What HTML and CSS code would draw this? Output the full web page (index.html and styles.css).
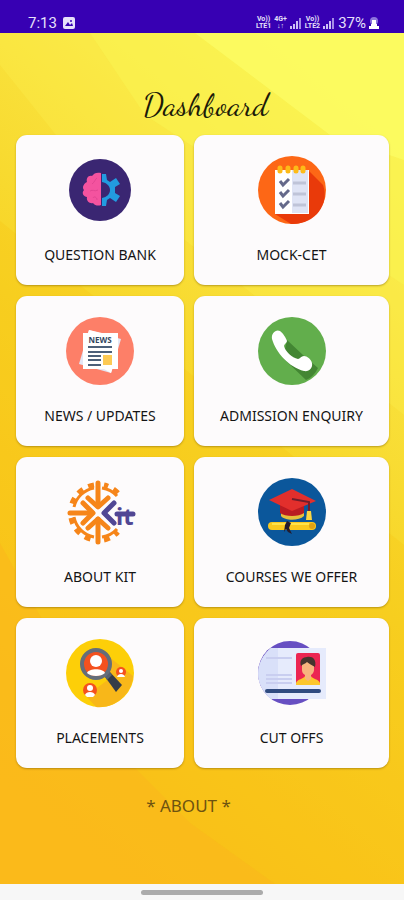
FILE: index.html
```html
<!DOCTYPE html>
<html lang="en">
<head>
    <meta charset="UTF-8">
    <meta name="viewport" content="width=device-width, initial-scale=1.0">
    <title>Dashboard</title>
    <link rel="stylesheet" href="styles.css">
</head>
<body>
    <!-- Status bar -->
    <header class="status-bar">
        <div class="status-left">
            <span>7:13</span>
            <svg class="status-photo" viewBox="0 0 12 12">
                <rect width="12" height="12" rx="2" fill="#e6e0fa"/>
                <path d="M2 9 L5 5 L7 8 L9 6 L10 9 Z" fill="#3700b3"/>
                <circle cx="8" cy="4" r="1" fill="#3700b3"/>
            </svg>
        </div>
        <div class="status-right">
            <span class="status-tiny">Vo))<br>LTE1</span>
            <span class="status-tiny">4G+<br>↓↑</span>
            <svg class="status-signal" viewBox="0 0 12 12">
                <path d="M0 9h2v3H0zM3 7h2v5H3zM6 4h2v8H6z" fill="#cdbff5"/>
                <path d="M9 1h2v11H9z" fill="#a58ce6"/>
            </svg>
            <span class="status-tiny">Vo))<br>LTE2</span>
            <svg class="status-signal" viewBox="0 0 12 12">
                <path d="M0 9h2v3H0zM3 7h2v5H3zM6 4h2v8H6z" fill="#cdbff5"/>
                <path d="M9 1h2v11H9z" fill="#a58ce6"/>
            </svg>
            <span>37%</span>
            <svg class="status-battery" viewBox="0 0 10 13">
                <circle cx="5" cy="4" r="4" fill="#8c74dc"/>
                <path d="M3 3h4v4h1v2h2v3H0V9h2V7h1z" fill="#fff"/>
            </svg>
        </div>
    </header>

    <main class="dashboard">
        <svg class="backdrop" viewBox="0 0 404 851" preserveAspectRatio="none">
            <defs>
                <linearGradient id="sun" x1="0.7" y1="0" x2="0.3" y2="1">
                    <stop offset="0" stop-color="#fbf054"/>
                    <stop offset="0.25" stop-color="#f9e13b"/>
                    <stop offset="0.5" stop-color="#f7d324"/>
                    <stop offset="0.8" stop-color="#f9c41b"/>
                    <stop offset="1" stop-color="#fbbd1b"/>
                </linearGradient>
            </defs>
            <rect width="404" height="851" fill="url(#sun)"/>
            <path d="M0 0H404V382L60 107L0 32Z" fill="#fdf14e" opacity="0.3"/>
            <path d="M90 0H404V252L145 82Z" fill="#faf551" opacity="0.5"/>
            <path d="M195 0H404V127L330 102Z" fill="#fbfc62" opacity="0.85"/>
            <path d="M0 188L404 512V851H0Z" fill="#f8c414" opacity="0.3"/>
            <path d="M0 510L110 710L190 790L275 851H0Z" fill="#fcb61b" opacity="0.5"/>
        </svg>

        <h1 class="title">Dashboard</h1>

        <div class="menu">
            <button type="button" class="card">
                <svg class="icon" viewBox="0 0 68 68">
                    <circle cx="34" cy="34" r="31" fill="#3a2672"/>
                    <path d="M35 17C31 16 28 17 26 20C22 19 20 23 21 26C17 28 16 32 18 34C15 37 18 41 21 41C20 45 24 48 27 47C29 50 33 50 35 49Z" fill="#f4539f"/>
                    <path d="M31 22C29 23 29 26 26 28M24 35C27 33 28 36 32 34M27 42C28 40 31 41 31 44" fill="none" stroke="#e34692"/>
                    <path d="M36 18L40 18L41 24L44 26L50 22L54 28L49 31V37L54 40L50 46L44 42L41 44L40 50H36V42C41 41 44 38 44 34C44 30 41 27 36 26Z" fill="#229be0"/>
                </svg>
                <span class="label">QUESTION BANK</span>
            </button>

            <button type="button" class="card">
                <svg class="icon" viewBox="0 0 68 68">
                    <circle cx="34" cy="34" r="34" fill="#fd6716"/>
                    <path d="M51 15L65 29C72 48 57 69 33 68L17 58Z" fill="#e93a0a"/>
                    <path d="M17 14H51V58H17Z" fill="#fff"/>
                    <path d="M34 14H50V57H34Z" fill="#dfe4f5"/>
                    <path d="M22 12V15M30 12V15M38 12V15M45 12V15" stroke="#fdbb18" stroke-width="5" stroke-linecap="round"/>
                    <path d="M22 25L25 29L31 23M22 36L25 40L31 34M22 47L25 51L31 45" fill="none" stroke="#65698a" stroke-width="3"/>
                    <path d="M35 27H48M35 38H48M35 49H48" stroke="#bfc4d8" stroke-width="3"/>
                </svg>
                <span class="label">MOCK-CET</span>
            </button>

            <button type="button" class="card">
                <svg class="icon" viewBox="0 0 68 68">
                    <circle cx="34" cy="34" r="34" fill="#fd7f68"/>
                    <path d="M23 13L55 22L45 56L13 47Z" fill="#e4e6f4"/>
                    <path d="M23 13L36 16H22ZM38 52L45 56L47 50Z" fill="#fff"/>
                    <path d="M17 16H52V52H17Z" fill="#fff"/>
                    <text class="icon-news" x="34" y="26" text-anchor="middle">NEWS</text>
                    <path d="M22 30H46M22 35H46M22 39H35M22 43H35M22 48H35" stroke="#4c6079" stroke-width="2"/>
                    <path d="M37 38H46V48H37Z" fill="#fdca54"/>
                </svg>
                <span class="label">NEWS / UPDATES</span>
            </button>

            <button type="button" class="card">
                <svg class="icon" viewBox="0 0 68 68">
                    <circle cx="34" cy="34" r="34" fill="#62ae4c"/>
                    <path d="M29 23L45 38L60 51C57 57 53 61 48 63L25 41Z" fill="#438633"/>
                    <path d="M14 22C13 16 18 12 22 14C25 16 28 21 29 24C29 26 26 27 26 29C27 34 34 41 40 42C42 42 43 39 46 39C49 39 53 42 54 46C55 51 51 55 46 54C31 50 18 36 14 22Z" fill="#fff"/>
                </svg>
                <span class="label">ADMISSION ENQUIRY</span>
            </button>

            <button type="button" class="card">
                <svg class="icon" viewBox="0 0 68 68">
                    <g fill="none" stroke="#f68519">
                        <path d="M51 18A25 25 0 0 0 36 10M28 10A25 25 0 0 0 8 29M8 39A25 25 0 0 0 28 59M36 59A25 25 0 0 0 51 51" stroke-width="3"/>
                        <path d="M52 15A28 28 0 0 0 38 7M28 7A28 28 0 0 0 5 29M5 40A28 28 0 0 0 28 62M38 62A28 28 0 0 0 52 54" stroke-width="5" stroke-dasharray="6 6"/>
                        <path d="M32 5V28M32 41V64M4 35H26" stroke-width="5" stroke-linecap="round"/>
                        <path d="M22 20L32 29L42 20M22 50L32 41L42 50M17 25L27 35L17 45" stroke-width="5" stroke-linecap="round" stroke-linejoin="round"/>
                    </g>
                    <path d="M48 25L38 35L48 45M51 36H67" fill="none" stroke="#514794" stroke-width="5" stroke-linecap="round" stroke-linejoin="round"/>
                    <text class="icon-kit" x="50" y="47">it</text>
                </svg>
                <span class="label">ABOUT KIT</span>
            </button>

            <button type="button" class="card">
                <svg class="icon" viewBox="0 0 68 68">
                    <circle cx="34" cy="34" r="34" fill="#0b579b"/>
                    <path d="M23 34V38C27 43 41 43 46 38V34Z" fill="#e5bf3c"/>
                    <path d="M22 24H46V35C41 39 27 39 22 35Z" fill="#b91b22"/>
                    <path d="M34 11L58 23L34 33L11 22Z" fill="#e22f2c"/>
                    <path d="M34 21L51 24V34" fill="none" stroke="#701d2b" stroke-width="2"/>
                    <path d="M49 33H53L54 42H48Z" fill="#fbd542"/>
                    <rect x="10" y="44" width="48" height="8" rx="4" fill="#fbc91d"/>
                    <path d="M14 46H51" stroke="#ffe34b" stroke-width="2"/>
                    <circle cx="54" cy="48" r="3" fill="#e0a314"/>
                    <path d="M29 43L33 45L31 50L34 56L30 54L28 51L26 54L27 47Z" fill="#251b2d"/>
                </svg>
                <span class="label">COURSES WE OFFER</span>
            </button>

            <button type="button" class="card">
                <svg class="icon" viewBox="0 0 68 68">
                    <circle cx="34" cy="34" r="34" fill="#fdcf08"/>
                    <path d="M42 17L67 37C66 54 50 70 30 68L20 57L43 40Z" fill="#f8b719"/>
                    <path d="M37 35L43 32L56 46L50 53Z" fill="#343c48"/>
                    <path d="M37 35L43 32L46 36L41 41Z" fill="#566170"/>
                    <circle cx="30" cy="25" r="14" fill="#f4511e" stroke="#656d79" stroke-width="4"/>
                    <circle cx="30" cy="22" r="6" fill="#fff"/>
                    <path d="M21 34C23 29 37 29 39 34C35 38 25 38 21 34Z" fill="#fff"/>
                    <circle cx="24" cy="51" r="7" fill="#f4511e"/>
                    <circle cx="24" cy="49" r="3" fill="#fff"/>
                    <path d="M19 56C20 52 28 52 29 56L27 58H21Z" fill="#fff"/>
                    <circle cx="55" cy="33" r="5" fill="#f4511e"/>
                    <circle cx="55" cy="32" r="2" fill="#fff"/>
                    <path d="M51 38C52 34 58 34 59 38Z" fill="#fff"/>
                </svg>
                <span class="label">PLACEMENTS</span>
            </button>

            <button type="button" class="card">
                <svg class="icon" viewBox="0 0 68 68">
                    <circle cx="32" cy="34" r="32" fill="#674fc2"/>
                    <path d="M13 9H68V60H13C-4 46 -4 23 13 9Z" fill="#e6ebfc"/>
                    <path d="M13 9H20V60H13C-4 46 -4 23 13 9Z" fill="#d9e0f9"/>
                    <path d="M8 19H34M8 36H34M8 40H34M8 44H34" stroke="#c9cef0" stroke-width="2"/>
                    <rect x="38" y="14" width="24" height="32" rx="2" fill="#ec2552"/>
                    <path d="M38 44C39 40 46 40 47 37H53C54 40 61 40 62 44V46H38Z" fill="#fcc62c"/>
                    <path d="M44 23H56V31C56 34 53 36 53 36V40L50 42L47 40V36C45 35 44 33 44 31Z" fill="#f7b47e"/>
                    <path d="M43 27C41 21 45 18 49 18C54 17 59 20 57 28C54 26 51 25 49 23C47 25 45 25 43 27Z" fill="#46342e"/>
                    <path d="M9 52H61" stroke="#304b80" stroke-width="4" stroke-linecap="round"/>
                </svg>
                <span class="label">CUT OFFS</span>
            </button>
        </div>

        <a class="about" href="#">* ABOUT *</a>
    </main>

    <!-- Gesture bar -->
    <footer class="nav-bar">
        <div class="nav-pill"></div>
    </footer>
</body>
</html>
```
FILE: styles.css
```css
* {
    box-sizing: border-box;
}

body {
    display: flex;
    flex-direction: column;
    min-height: 100vh;
    margin: 0;
    font-family: "Noto Sans", "Open Sans", sans-serif;
    background-color: #f7f7f7;
}

.status-bar {
    display: flex;
    justify-content: space-between;
    height: 33px;
    padding: 12px 25px 0 28px;
    background-color: #3700b3;
    color: #e6e0fa;
    font-family: Roboto, sans-serif;
    font-size: 15px;
    line-height: 22px;
}

.status-left,
.status-right {
    display: flex;
    align-items: center;
    height: 22px;
}

.status-left {
    gap: 6px;
}

.status-right {
    gap: 3px;
}

.status-photo,
.status-signal {
    width: 12px;
    height: 12px;
}

.status-battery {
    width: 10px;
    height: 13px;
}

.status-tiny {
    font-size: 7px;
    font-weight: bold;
    line-height: 7px;
    text-align: center;
}

.dashboard {
    position: relative;
    flex: 1;
    display: flex;
    flex-direction: column;
    padding: 52px 15px 24px 16px;
    isolation: isolate;
}

.backdrop {
    position: absolute;
    top: 0;
    left: 0;
    z-index: -1;
    width: 100%;
    height: 100%;
}

.title {
    margin: 0 0 10px;
    padding-left: 6px;
    color: #1c1a08;
    font-family: "Dancing Script", "Liberation Serif", serif;
    font-size: 32px;
    font-weight: normal;
    line-height: 40px;
    text-align: center;
}

.menu {
    display: grid;
    grid-template-columns: 168fr 195fr;
    gap: 11px 10px;
}

.card {
    display: flex;
    flex-direction: column;
    align-items: center;
    height: 150px;
    padding: 21px 0 0;
    border: none;
    border-radius: 11px;
    background-color: #fdfbfc;
    box-shadow: 0 1px 2px rgba(110, 80, 0, 0.45);
    color: #141414;
    font-family: inherit;
    cursor: pointer;
}

.icon {
    width: 68px;
    height: 68px;
    margin-bottom: 21px;
    overflow: visible;
}

.icon-news {
    fill: #33475f;
    font-size: 8px;
    font-weight: bold;
}

.icon-kit {
    fill: #514794;
    font-size: 24px;
    font-weight: bold;
}

.label {
    font-size: 14px;
    line-height: 20px;
}

.about {
    align-self: center;
    margin-top: 26px;
    padding-right: 28px;
    color: #6e5310;
    font-size: 17px;
    line-height: 24px;
    text-decoration: none;
}

.nav-bar {
    display: flex;
    justify-content: center;
    height: 16px;
    padding-top: 6px;
}

.nav-pill {
    width: 30%;
    height: 5px;
    border-radius: 3px;
    background-color: #ababab;
}
```
